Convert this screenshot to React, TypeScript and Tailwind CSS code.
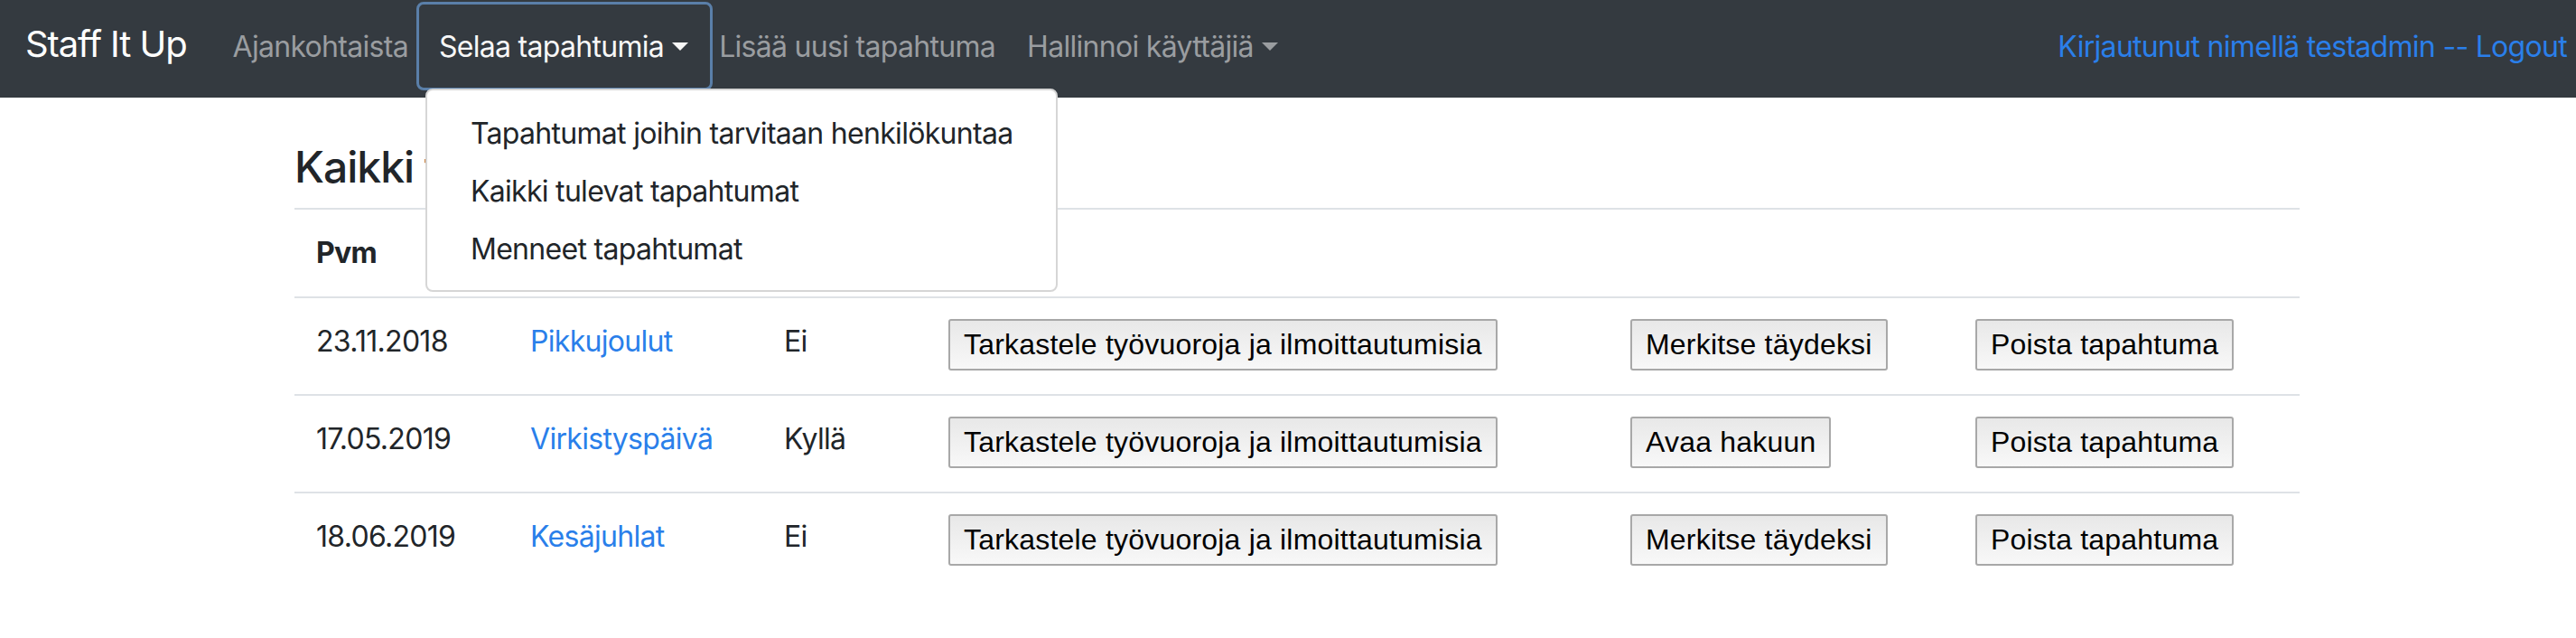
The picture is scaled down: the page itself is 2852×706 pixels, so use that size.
import React from "react";

const cols = ["w-[237px]", "w-[281px]", "w-[182px]", "w-[755px]", "w-[382px]", "w-[383px]"];

function Caret({ color }: { color: string }) {
  return (
    <span
      className={`inline-block w-0 h-0 ml-[9px] border-x-[9px] border-x-transparent border-t-[9px] ${color} align-middle relative top-[-2px]`}
    />
  );
}

function Btn({ children }: { children: React.ReactNode }) {
  return (
    <button className="font-['Liberation_Sans',Arial,sans-serif] tracking-[0.2px] text-[32px] leading-[37px] px-[15px] py-[8px] border-2 border-[#a8a8a8] rounded-[3px] bg-linear-to-b from-[#e8e8e8] to-[#f8f8f8] text-black whitespace-nowrap">
      {children}
    </button>
  );
}

const rows = [
  { date: "23.11.2018", name: "Pikkujoulut", full: "Ei", action: "Merkitse täydeksi" },
  { date: "17.05.2019", name: "Virkistyspäivä", full: "Kyllä", action: "Avaa hakuun" },
  { date: "18.06.2019", name: "Kesäjuhlat", full: "Ei", action: "Merkitse täydeksi" },
];

export default function App() {
  return (
    <div className="relative w-[2852px] h-[706px] bg-white font-['Inter','Liberation_Sans',sans-serif] tracking-[-0.7px] text-[#212529] overflow-hidden">
      <nav className="h-[108px] bg-[#343a40] flex items-stretch pl-[28px] pr-[10px] pb-[5px]">
        <div className="flex items-center pb-[6px] mr-[51px]">
          <span className="text-[40px] leading-[48px] tracking-[-1.1px] text-white whitespace-nowrap">Staff It Up</span>
        </div>
        <div className="flex items-center mr-[34px]">
          <span className="text-[32px] leading-[48px] text-[#9a9da0] whitespace-nowrap">Ajankohtaista</span>
        </div>
        <div className="relative flex items-center mr-[34px]">
          <div className="absolute left-[-25px] right-[-27px] top-[2px] h-[98px] border-[3px] border-[#5a7fa9] rounded-[8px]" />
          <span className="relative text-[32px] leading-[48px] text-[#f7f7f7] whitespace-nowrap">
            Selaa tapahtumia
            <Caret color="border-t-[#f7f7f7]" />
          </span>
          <div className="absolute left-[-15px] top-[98px] w-[700px] h-[225px] bg-white border-2 border-[#d6d6d6] rounded-[8px] py-[16px] z-10">
            {[
              "Tapahtumat joihin tarvitaan henkilökuntaa",
              "Kaikki tulevat tapahtumat",
              "Menneet tapahtumat",
            ].map((t) => (
              <div key={t} className="h-[64px] flex items-center px-[48px] text-[32px] text-[#212529] whitespace-nowrap">
                {t}
              </div>
            ))}
          </div>
        </div>
        <div className="flex items-center mr-[35px]">
          <span className="text-[32px] leading-[48px] text-[#9a9da0] whitespace-nowrap">Lisää uusi tapahtuma</span>
        </div>
        <div className="flex items-center">
          <span className="text-[32px] leading-[48px] text-[#9a9da0] whitespace-nowrap">
            Hallinnoi käyttäjiä
            <Caret color="border-t-[#9a9da0]" />
          </span>
        </div>
        <div className="flex items-center ml-auto">
          <span className="text-[32px] leading-[48px] text-[#2a7fea] whitespace-nowrap">
            Kirjautunut nimellä testadmin -- Logout
          </span>
        </div>
      </nav>

      <main className="ml-[326px] w-[2220px] pt-[48px]">
        <h4 className="text-[48px] leading-[57.6px] tracking-[-1px] font-medium mb-[16px] whitespace-nowrap">Kaikki tapahtumat</h4>
        <div className="flex h-[98px] border-t-2 border-[#dee2e6] text-[32px] leading-[48px] font-bold">
          <div className={`${cols[0]} px-[24px] pt-[24px]`}>Pvm</div>
          <div className={`${cols[1]} px-[24px] pt-[24px]`} />
          <div className={`${cols[2]} px-[24px] pt-[24px]`} />
          <div className={`${cols[3]} px-[24px] pt-[24px]`} />
          <div className={`${cols[4]} px-[24px] pt-[24px]`} />
          <div className={`${cols[5]} px-[24px] pt-[24px]`} />
        </div>
        {rows.map((r) => (
          <div key={r.date} className="flex h-[108px] border-t-2 border-[#dee2e6] text-[32px] leading-[48px]">
            <div className={`${cols[0]} px-[24px] pt-[24px] whitespace-nowrap`}>{r.date}</div>
            <div className={`${cols[1]} px-[24px] pt-[24px] whitespace-nowrap`}>
              <a className="text-[#2a7fea]">{r.name}</a>
            </div>
            <div className={`${cols[2]} px-[24px] pt-[24px]`}>{r.full}</div>
            <div className={`${cols[3]} px-[24px] pt-[23px]`}>
              <Btn>Tarkastele työvuoroja ja ilmoittautumisia</Btn>
            </div>
            <div className={`${cols[4]} px-[24px] pt-[23px]`}>
              <Btn>{r.action}</Btn>
            </div>
            <div className={`${cols[5]} px-[24px] pt-[23px]`}>
              <Btn>Poista tapahtuma</Btn>
            </div>
          </div>
        ))}
      </main>
    </div>
  );
}
